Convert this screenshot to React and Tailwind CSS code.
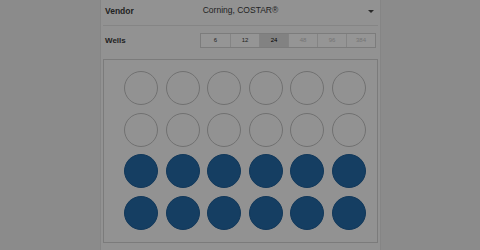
import React from "react";

const sizes = [
  { label: "6", enabled: true },
  { label: "12", enabled: true },
  { label: "24", enabled: true, active: true },
  { label: "48", enabled: false },
  { label: "96", enabled: false },
  { label: "384", enabled: false },
];

// 24-well plate: first two rows empty, last two filled
const rows = [false, false, true, true];

function Well({ filled }) {
  return filled ? (
    <div className="w-[34px] h-[34px] rounded-full bg-[#153e62] border border-[#12385a]" />
  ) : (
    <div className="w-[34px] h-[34px] rounded-full border-[1.5px] border-[#717171]" />
  );
}

export default function App() {
  return (
    <div
      className="w-[480px] h-[250px] bg-[#8b8b8b] overflow-hidden"
      style={{ fontFamily: '"Liberation Sans", Arial, sans-serif' }}
    >
      <div className="ml-[100px] w-[281px] h-full bg-[#929292] border-r border-l border-[#858585] pl-[2px] pr-[2px] flex flex-col">
        <div className="h-[26px] flex items-center border-b border-[#858585] pb-[2px] relative">
          <span className="pl-[2px] text-[8.5px] font-bold text-[#222]">Vendor</span>
          <span className="absolute left-0 right-0 text-center text-[8.5px] text-[#222] pb-[2px]">
            Corning, COSTAR®
          </span>
          <span className="ml-auto mr-[4px] w-0 h-0 border-l-[3px] border-r-[3px] border-t-[3px] border-l-transparent border-r-transparent border-t-[#2a2a2a]" />
        </div>
        <div className="h-[29px] flex items-center">
          <span className="pl-[2px] text-[8px] font-bold text-[#222]">Wells</span>
          <div className="ml-auto mr-[2px] flex border border-[#7c7c7c] h-[15px]">
            {sizes.map((s, i) => (
              <div
                key={s.label}
                className={
                  "w-[29px] flex items-center justify-center text-[6px] " +
                  (i > 0 ? "border-l border-[#848484] " : "") +
                  (s.active ? "bg-[#828282] text-[#1e1e1e]" : "bg-[#959595] ") +
                  (s.enabled ? "text-[#222]" : "text-[#747474]")
                }
              >
                {s.label}
              </div>
            ))}
          </div>
        </div>
        <div className="mt-[4px] h-[184px] border border-[#7b7b7b] pl-[20px] pt-[11px]">
          <div className="grid grid-cols-[repeat(6,34px)] gap-[7.6px]">
            {rows.map((filled, r) =>
              [0, 1, 2, 3, 4, 5].map((c) => <Well key={r + "-" + c} filled={filled} />)
            )}
          </div>
        </div>
      </div>
    </div>
  );
}
